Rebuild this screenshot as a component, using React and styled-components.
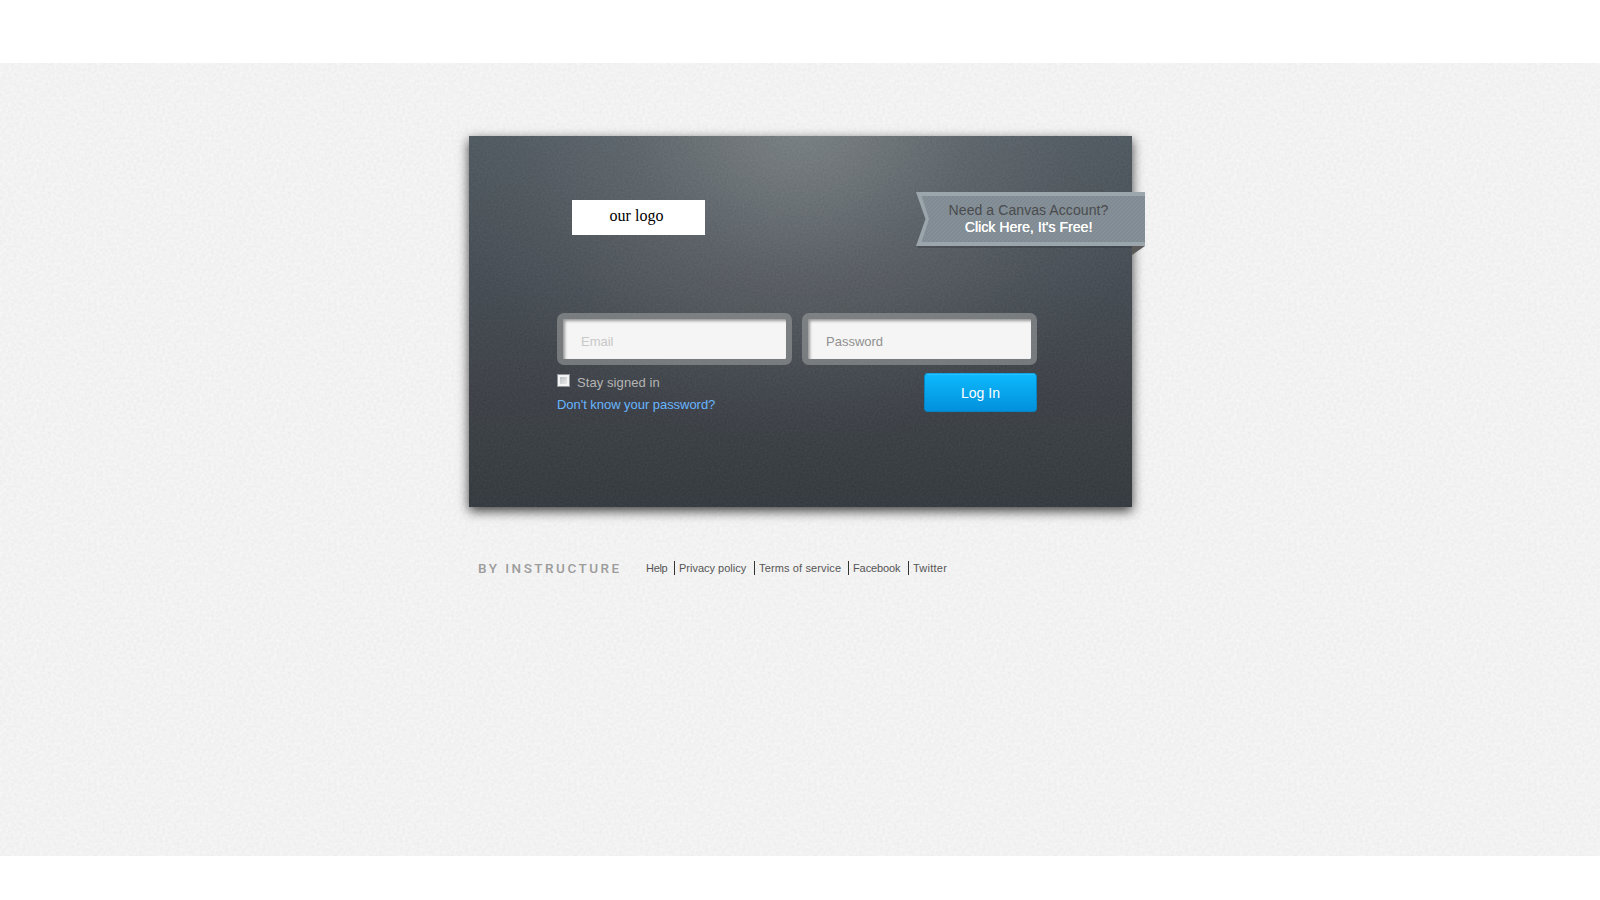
import React from "react";
import styled, { createGlobalStyle } from "styled-components";

const grain = (frequency, opacity) =>
  `url("data:image/svg+xml,${encodeURIComponent(
    `<svg xmlns='http://www.w3.org/2000/svg' width='240' height='240'><filter id='n' x='0' y='0' width='100%' height='100%' color-interpolation-filters='sRGB'><feTurbulence type='fractalNoise' baseFrequency='${frequency}' numOctaves='2' stitchTiles='stitch'/><feColorMatrix values='1.6 0 0 0 -.3 1.6 0 0 0 -.3 1.6 0 0 0 -.3 0 0 0 0 1'/></filter><rect width='240' height='240' filter='url(#n)' opacity='${opacity}'/></svg>`
  )}")`;

const GlobalStyle = createGlobalStyle`
  * { box-sizing: border-box; }
  body {
    margin: 0;
    background: #fff;
    font-family: "Liberation Sans", Arial, sans-serif;
  }
`;

const Page = styled.div`
  height: 900px;
  padding: 63px 0 44px;
  overflow: hidden;
`;

const Backdrop = styled.main`
  height: 793px;
  padding: 73px 0 0 469px;
  background: ${grain(0.35, 0.035)}, #f6f6f6;
`;

const Card = styled.section`
  width: 663px;
  height: 371px;
  background:
    ${grain(0.5, 0.04)},
    radial-gradient(ellipse 370px 320px at 50% -12px, rgba(142, 147, 147, 0.7), rgba(125, 130, 133, 0.36) 45%, rgba(115, 121, 125, 0.12) 78%, rgba(110, 116, 120, 0) 100%),
    linear-gradient(#4d575f 0%, #454b52 40%, #3c4147 70%, #34393f 100%);
  box-shadow: 0 4px 11px rgba(0, 0, 0, 0.75);
`;

const CardHeader = styled.header`
  display: flex;
  justify-content: space-between;
  align-items: flex-start;
  height: 177px;
  margin-right: -13px;
  padding: 56px 0 0 103px;
`;

const Logo = styled.div`
  width: 133px;
  height: 35px;
  margin-top: 8px;
  padding-right: 4px;
  background: #fff;
  color: #000;
  font: 16px/32px "Liberation Serif", "Times New Roman", serif;
  text-align: center;
`;

const RibbonLink = styled.a`
  position: relative;
  display: block;
  width: 229px;
  height: 54px;
  padding: 10px 4px 0 0;
  text-align: center;
  text-decoration: none;
  font-size: 14px;
  line-height: 17px;
`;

const RibbonShape = styled.svg`
  position: absolute;
  top: 0;
  left: 0;
  overflow: visible;
`;

const RibbonLine = styled.span`
  position: relative;
  display: block;
  color: ${(p) => (p.$strong ? "#fff" : "#4a4b4e")};
  letter-spacing: ${(p) => (p.$strong ? "0.06px" : "0.08px")};
  text-shadow: ${(p) => (p.$strong ? "0.3px 0 0 #fff" : "none")};
`;

const Form = styled.form`
  width: 480px;
  margin-left: 88px;
`;

const Fields = styled.div`
  display: flex;
  gap: 10px;
`;

const Field = styled.input`
  width: 235px;
  height: 52px;
  padding: 4px 17px 0 18px;
  border: 6px solid rgba(150, 154, 153, 0.62);
  border-radius: 7px;
  outline: none;
  background: #f5f5f5;
  background-clip: padding-box;
  box-shadow: inset 2px 2px 3px rgba(0, 0, 0, 0.38);
  color: #888;
  font: 13px "Liberation Sans", Arial, sans-serif;
  &::placeholder {
    color: ${(p) => (p.$faint ? "#c8c8c8" : "#909090")};
    opacity: 1;
  }
`;

const Actions = styled.div`
  display: flex;
  justify-content: space-between;
  padding-top: 8px;
`;

const Help = styled.div`
  display: flex;
  flex-direction: column;
  font-size: 13px;
`;

const StayLabel = styled.label`
  display: flex;
  gap: 7px;
  height: 22px;
  color: #b4b4b4;
  line-height: 19px;
  letter-spacing: 0.08px;
`;

const Checkbox = styled.input`
  appearance: none;
  width: 13px;
  height: 13px;
  margin: 1px 0 0;
  border: 1px solid #92979b;
  background: linear-gradient(135deg, #b0b5bb, #f4f4f4);
  box-shadow: inset 0 0 0 2px #f4f4f4;
`;

const ForgotLink = styled.a`
  color: #67b5ff;
  line-height: 19px;
  letter-spacing: -0.04px;
  text-decoration: none;
`;

const LoginButton = styled.button`
  width: 113px;
  height: 39px;
  padding: 0;
  border: 1px solid #0784c4;
  border-top-color: #13a4e4;
  border-radius: 4px;
  background: linear-gradient(#0db9fc, #0290dc);
  box-shadow: inset 0 1px 0 rgba(70, 205, 255, 0.45);
  color: #fff;
  font: 14px "Liberation Sans", Arial, sans-serif;
`;

const Footer = styled.footer`
  display: flex;
  align-items: center;
  margin-top: 53px;
  padding-left: 9px;
  height: 16px;
`;

const Brand = styled.span`
  width: 168px;
  color: #9c9c9c;
  font: 500 13.5px/16px Roboto, sans-serif;
  letter-spacing: 2.5px;
  white-space: nowrap;
`;

const FooterLink = styled.a`
  width: ${(p) => p.$width}px;
  height: 14px;
  padding-left: ${(p) => (p.$first ? 0 : 4)}px;
  border-left: ${(p) => (p.$first ? "0" : "1px solid #333")};
  color: #555;
  font-size: 11px;
  line-height: 14px;
  letter-spacing: ${(p) => p.$tracking}px;
  text-decoration: none;
  white-space: nowrap;
`;

const footerLinks = [
  ["Help", 28, -0.3],
  ["Privacy policy", 80, 0],
  ["Terms of service", 94, 0.13],
  ["Facebook", 60, -0.1],
  ["Twitter", 45, 0.25],
];

function Ribbon() {
  return (
    <RibbonLink href="#">
      <RibbonShape width="229" height="64" viewBox="0 0 229 64" aria-hidden="true">
        <defs>
          <pattern id="stripes" width="4" height="4" patternUnits="userSpaceOnUse">
            <rect width="4" height="4" fill="#808b93" />
            <path d="M-1 1L1-1M0 4L4 0M3 5L5 3" stroke="#89939a" strokeWidth="1" />
          </pattern>
        </defs>
        <path d="M216 54H229L216 63Z" fill="#5b5a59" />
        <path d="M1 54H216V56H2Z" fill="#30353b" opacity=".35" />
        <path d="M0 0H229V54H0L9.500 27Z" fill="#9ba6ac" />
        <path d="M5.500 4H229V50H5.500L13 27Z" fill="url(#stripes)" />
      </RibbonShape>
      <RibbonLine>Need a Canvas Account?</RibbonLine>
      <RibbonLine $strong>Click Here, It's Free!</RibbonLine>
    </RibbonLink>
  );
}

export default function App() {
  return (
    <Page>
      <GlobalStyle />
      <Backdrop>
        <Card>
          <CardHeader>
            <Logo>our logo</Logo>
            <Ribbon />
          </CardHeader>
          <Form>
            <Fields>
              <Field type="text" placeholder="Email" $faint />
              <Field type="password" placeholder="Password" />
            </Fields>
            <Actions>
              <Help>
                <StayLabel>
                  <Checkbox type="checkbox" />
                  Stay signed in
                </StayLabel>
                <ForgotLink href="#">Don't know your password?</ForgotLink>
              </Help>
              <LoginButton type="button">Log In</LoginButton>
            </Actions>
          </Form>
        </Card>
        <Footer>
          <Brand>BY INSTRUCTURE</Brand>
          {footerLinks.map(([label, width, tracking], i) => (
            <FooterLink key={label} href="#" $width={width} $tracking={tracking} $first={i === 0}>
              {label}
            </FooterLink>
          ))}
        </Footer>
      </Backdrop>
    </Page>
  );
}
